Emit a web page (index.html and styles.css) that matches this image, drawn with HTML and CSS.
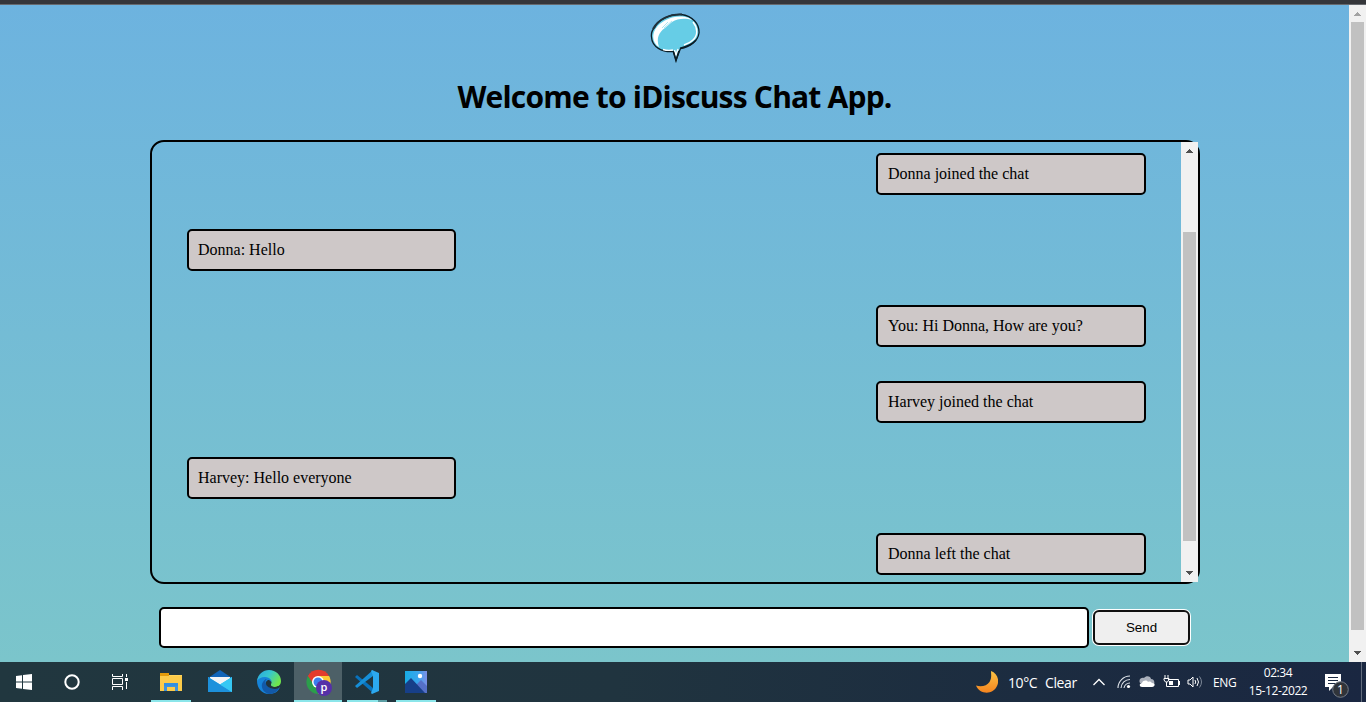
FILE: index.html
```html
<!DOCTYPE html>
<html lang="en">
<head>
<meta charset="utf-8">
<title>iDiscuss Chat App</title>
<link rel="stylesheet" href="styles.css">
</head>
<body>
<div class="browser-edge"></div>
<div class="viewport">
  <main class="page">
    <svg class="logo" viewBox="0 0 50 50">
      <path d="M5 14C9 6 20 1 31 1.500C43 3 49.500 11 49 20C48 28 40 34 30.500 35.500L26 47L23.500 38.500C12 39.500 2 34 1.500 24C1 20 2 17 5 14Z" fill="#66cde6" stroke="#0b1d26" stroke-width="1.300"/>
      <path d="M3 16C8 6 20 1 32 1.500" fill="none" stroke="#20323c" stroke-width="2"/>
      <path d="M9 34C4 31 2 25 4 19C8 9 20 3 32 3.500C37 4 40 5 42 7C36 5 28 5 22 9L15 15C9 19 6 25 9 34Z" fill="#fff"/>
      <path d="M43 9C48 15 48 22 43 27C40 30 37 31 34 32M13 36.500Q18 38 23 37M24.500 37L26 42L28 36" fill="none" stroke="#fff" stroke-width="1.400"/>
      <path d="M14 15L22 8M12 15L18 9" fill="none" stroke="#9be0ef" stroke-width=".8"/>
      <path d="M30 35.500C35 34 42 32 46 27M23.500 39L26 47.500L29 38" fill="none" stroke="#0b1d26" stroke-width="1.600"/>
    </svg>
    <h1 class="title">Welcome to iDiscuss Chat App.</h1>
    <section class="chat">
      <div class="messages">
        <div class="message right">Donna joined the chat</div>
        <div class="message left">Donna: Hello</div>
        <div class="message right">You: Hi Donna, How are you?</div>
        <div class="message right">Harvey joined the chat</div>
        <div class="message left">Harvey: Hello everyone</div>
        <div class="message right">Donna left the chat</div>
      </div>
      <div class="scrollbar">
        <svg class="arrow" viewBox="0 0 17 17"><path d="M8 7h1v1h1v1h1v1h1v1H5v-1h1V9h1V8h1z" fill="#505050"/></svg>
        <div class="thumb thumb-chat"></div>
        <svg class="arrow" viewBox="0 0 17 17"><path d="M5 6h7v1h-1v1h-1v1H9v1H8V9H7V8H6V7H5z" fill="#505050"/></svg>
      </div>
    </section>
    <form class="composer">
      <input class="field" type="text">
      <button class="send" type="button">Send</button>
    </form>
  </main>
  <div class="scrollbar">
    <svg class="arrow" viewBox="0 0 17 17"><path d="M8 7h1v1h1v1h1v1h1v1H5v-1h1V9h1V8h1z" fill="#a3a3a3"/></svg>
    <div class="thumb thumb-page"></div>
    <svg class="arrow" viewBox="0 0 17 17"><path d="M5 6h7v1h-1v1h-1v1H9v1H8V9H7V8H6V7H5z" fill="#505050"/></svg>
  </div>
</div>
<footer class="taskbar">
  <div class="apps">
    <div class="app"><svg width="16" height="16" viewBox="0 0 16 16"><path d="M0 2l6-.8v6.3H0zM7 1l9-1v7.5H7zM0 8.5h6v6.3L0 14zM7 8.5h9V16l-9-1z" fill="#fff"/></svg></div>
    <div class="app"><svg width="16" height="16" viewBox="0 0 16 16"><circle cx="8" cy="8" r="6.7" fill="none" stroke="#fff" stroke-width="2"/></svg></div>
    <div class="app"><svg width="16" height="16" viewBox="0 0 16 16"><path d="M.5 0v2.5h10V0M.5 16v-3.5h10V16M.5 4.5h10v6H.5zM14.500 0v3M14.500 8v7" fill="none" stroke="#fff"/><path d="M13 4h3v3h-3z" fill="#fff"/></svg></div>
    <div class="app open"><svg width="24" height="24" viewBox="0 0 24 24"><path d="M1 4h8l1 1h13v16H1z" fill="#ffd45a"/><path d="M1 3h9v3H1z" fill="#e39b0b"/><path d="M1 6h22v15H1z" fill="#fccb4a"/><path d="M5 13h14v8h-3v-4H8v4H5z" fill="#3f93dc"/><path d="M5 13h14v3H5z" fill="#318fe2"/></svg></div>
    <div class="app"><svg width="24" height="24" viewBox="0 0 24 24"><path d="M0 8l12-8 12 8v3H0z" fill="#1064b8"/><path d="M2 7h20v9H2z" fill="#f3f4f6"/><path d="M0 7l12 7.500L24 7v15H0z" fill="#2bb8ee"/><path d="M0 7l24 15H0z" fill="#1d91dc"/><path d="M12 14.500L24 7v15z" fill="#36c8f4"/></svg></div>
    <div class="app"><svg width="24" height="24" viewBox="0 0 24 24">
      <defs><linearGradient id="eg" x1="0" y1="0" x2="1" y2=".5"><stop offset="0" stop-color="#2aa6df"/><stop offset=".5" stop-color="#36c6cf"/><stop offset="1" stop-color="#6fe64c"/></linearGradient></defs>
      <path d="M0 11C1 4 8 3 12 6l3 5-2 4 3 3 7-1C21 22 17 24 12 24 5 24 0 18 0 11z" fill="#1683d8"/>
      <path d="M0 11C1 4 6 0 12 0c7 0 12 5 12 11 0 4-3 6-6 6-3 0-5-1-4-3 2-3-1-7-6-7-4 0-7 2-8 4z" fill="url(#eg)"/>
      <path d="M10 9c-2 1-2 3-1 5 2 4 7 6 13 4-2 4-6 6-10 6C7 23 4 18 5 14c1-3 3-5 5-5z" fill="#1259a8"/>
      <path d="M11 10c-2 1-3 3-1 6 3 3 9 4 12 2l1-1-2-1c-3 2-8 1-7-2 1-2-1-4-3-4z" fill="#21343d"/>
    </svg></div>
    <div class="app active"><svg width="28" height="28" viewBox="0 0 28 28">
      <path d="M13 13L3 7A12 12 0 0 1 24 7z" fill="#e33b2e"/><path d="M13 13L24 7A12 12 0 0 1 13 25z" fill="#fcc934"/><path d="M13 13L13 25A12 12 0 0 1 3 7z" fill="#2b9e4b"/>
      <path d="M12 7h12l1 3H12z" fill="#fcc934"/><path d="M3 7L9 16l4-9 10 0A12 12 0 0 0 3 7z" fill="#e33b2e"/>
      <circle cx="13" cy="13" r="6" fill="#fff"/><circle cx="13" cy="13" r="4.500" fill="#3b7fee"/>
      <circle cx="19" cy="19" r="8" fill="#5630a8"/><text x="19" y="22" text-anchor="middle" class="profile">p</text></svg></div>
    <div class="app split"><svg width="24" height="24" viewBox="0 0 24 24"><path d="M0 7l2-2L18 18v5z" fill="#0872bc"/><path d="M0 16l2 2L18 6V0z" fill="#168fd8"/><path d="M17 0l7 3v18l-7 3-1-1 2-5V6l-2-5z" fill="#2ca8ef"/></svg></div>
    <div class="app open"><svg width="22" height="22" viewBox="0 0 22 22"><defs><linearGradient id="ph" x2="1"><stop offset="0" stop-color="#17ace5"/><stop offset=".6" stop-color="#3aa5ed"/><stop offset="1" stop-color="#7d8fe5"/></linearGradient></defs><path d="M0 0h22v22H0z" fill="url(#ph)"/><path d="M11 14l5-5 6 6v7H11z" fill="#5570c8"/><path d="M0 13l6-6 14 15H0z" fill="#173f88"/><circle cx="15" cy="5" r="2.200" fill="#fff"/></svg></div>
  </div>
  <div class="tray">
    <svg width="22" height="22" viewBox="0 0 22 22"><defs><linearGradient id="mn" x2="0" y2="1"><stop offset="0" stop-color="#fbc344"/><stop offset="1" stop-color="#f5841f"/></linearGradient></defs><path d="M15 0C21 2 24 9 21 15C17 24 4 24 0 14.500C5 16 11 15 13.500 11C16 7 15 3 15 0z" fill="url(#mn)"/></svg>
    <span class="temp">10°C</span>
    <span class="sky">Clear</span>
    <svg width="12" height="8" viewBox="0 0 12 8"><path d="M.5 7L6 1.500 11.500 7" fill="none" stroke="#fff" stroke-width="1.300"/></svg>
    <svg width="14" height="14" viewBox="0 0 14 14"><path d="M1 13A12 12 0 0 1 13 1M4 13A9 9 0 0 1 13 4.500M7 13a6 6 0 0 1 6-5" fill="none" stroke="#dfe4ea" stroke-width="1.100"/><circle cx="11.500" cy="11.500" r="1.600" fill="#fff"/></svg>
    <svg width="16" height="12" viewBox="0 0 16 12"><path d="M1 7C-1 3 3 1 5 2c2-3 7-2 7 1 3 0 4 3 3 5z" fill="#aab0bb"/><path d="M3 11C0 11 0 7 3 7c1-3 5-3 6-1 2-1 3 0 4 1 4 0 3 4 0 4z" fill="#fff"/></svg>
    <svg width="17" height="14" viewBox="0 0 17 14"><path d="M5 4.500h10.500v7H5M2 0v3M5 0v3M1 3.500h5v1L4.500 7h-2L1 5zM3.500 7v4.500H6" fill="none" stroke="#fff"/><path d="M6 6h4v4H6zM15.500 6H17v4h-1.500z" fill="#fff"/></svg>
    <svg width="16" height="14" viewBox="0 0 16 14"><path d="M1 5h2l3-3v10L3 9H1z" fill="none" stroke="#fff"/><path d="M8 5q1.500 2 0 4M10 3q3 4 0 8" fill="none" stroke="#fff"/><path d="M12.500 1.500q4 5.500 0 11" fill="none" stroke="#7c8797"/></svg>
    <span class="lang">ENG</span>
    <div class="clock"><span>02:34</span><span class="date">15-12-2022</span></div>
    <svg class="notice" width="26" height="26" viewBox="0 0 26 26"><path d="M1 1h16v13H9l-4 4v-4H1z" fill="#fff"/><path d="M4 4.500h10M4 7.500h10M4 10.500h10" stroke="#1b2941"/><circle cx="16.500" cy="16.500" r="7.800" fill="#30343a" stroke="#747b86"/><text x="16.500" y="21" text-anchor="middle" class="count">1</text></svg>
    <div class="peek"></div>
  </div>
</footer>
</body>
</html>
```
FILE: styles.css
```css
* { box-sizing: border-box; }
body { margin: 0; height: 702px; overflow: hidden; display: flex; flex-direction: column; font-family: "Liberation Serif", serif; }
svg { display: block; }
.browser-edge { height: 5px; background: #35363a; border-bottom: 1px solid #66696e; flex: none; }
.viewport { height: 657px; display: flex; flex: none; }
.page { width: 1349px; padding-top: 8px; background: linear-gradient(#6db3df, #7bc5cb); display: flex; flex-direction: column; align-items: center; }
.logo { width: 50px; height: 50px; flex: none; margin-left: 1px; }
.title { margin: 12px 0 0; height: 43px; line-height: 43px; white-space: nowrap; font-family: "Open Sans", sans-serif; font-size: 30px; font-weight: 700; letter-spacing: -.8px; color: #000; }
.chat { margin: 22px 0 0 1px; width: 1050px; height: 444px; border: 2px solid #000; border-radius: 14px; display: flex; flex: none; }
.messages { width: 1029px; padding: 11px 35px 0; display: flex; flex-direction: column; gap: 34px; }
.message { width: 270px; height: 42px; padding: 0 10px; line-height: 38px; font-size: 16px; background: #cec8c8; border: 2px solid #000; border-radius: 5px; white-space: nowrap; }
.left { width: 269px; padding-left: 9px; }
.right { align-self: flex-end; }
.scrollbar { width: 17px; background: #f1f1f1; display: flex; flex-direction: column; align-items: center; flex: none; }
.arrow { width: 17px; height: 17px; flex: none; shape-rendering: crispEdges; }
.thumb { width: 13px; background: #c1c1c1; margin-bottom: auto; }
.thumb-chat { height: 309px; margin-top: 73px; }
.thumb-page { height: 608px; }
.composer { width: 1031px; margin-top: 23px; display: flex; align-items: center; gap: 4px; }
.field { width: 930px; height: 41px; background: #fff; border: 2px solid #000; border-radius: 5px; outline: none; }
.send { width: 97px; height: 35px; background: #efefef; border: 2px solid #101010; border-radius: 6px; box-shadow: 0 0 0 1px #fff; font: 13.333px "Liberation Sans", Arial, sans-serif; color: #000; padding: 0; }
.taskbar { height: 40px; flex: none; background: linear-gradient(90deg, #21373f, #20343f 45%, #1c2c40 75%, #1a2741); display: flex; justify-content: space-between; color: #fff; font-family: "Open Sans", sans-serif; }
.apps { display: grid; grid-template-columns: 48px 48px 50px 49px 49px 50px 48px 49px 50px; }
.app { display: flex; align-items: center; justify-content: center; }
.app:nth-child(3) { padding-right: 2px; }
.app:nth-child(6) { padding-right: 1px; }
.open { background: linear-gradient(#8be6ea, #8be6ea) center bottom / 40px 2px no-repeat; }
.active { background: linear-gradient(#8be6ea, #8be6ea) bottom / 100% 2px no-repeat #4d6067; padding: 2px 0 0 2px; }
.split { background: linear-gradient(90deg, #8be6ea 31px, #5b9da3 31px) 5px bottom / 40px 2px no-repeat; }
.profile { font: 600 11px "Open Sans", sans-serif; fill: #fff; }
.tray { display: grid; grid-template-columns: 32px 37px 48px 24px 22px 24px 24px 26px 32px 66px 50px 5px; align-items: center; white-space: nowrap; }
.temp, .sky { font-size: 14px; letter-spacing: -.4px; padding-top: 1px; }
.lang { font-size: 12px; letter-spacing: -.4px; }
.clock { display: flex; flex-direction: column; align-items: center; font-size: 12px; line-height: 18px; letter-spacing: -.4px; }
.notice { margin: 8px 0 0 13px; }
.count { font: 12px "Open Sans", sans-serif; fill: #fff; }
.peek { height: 40px; border-left: 1px solid #626c7d; }
```
